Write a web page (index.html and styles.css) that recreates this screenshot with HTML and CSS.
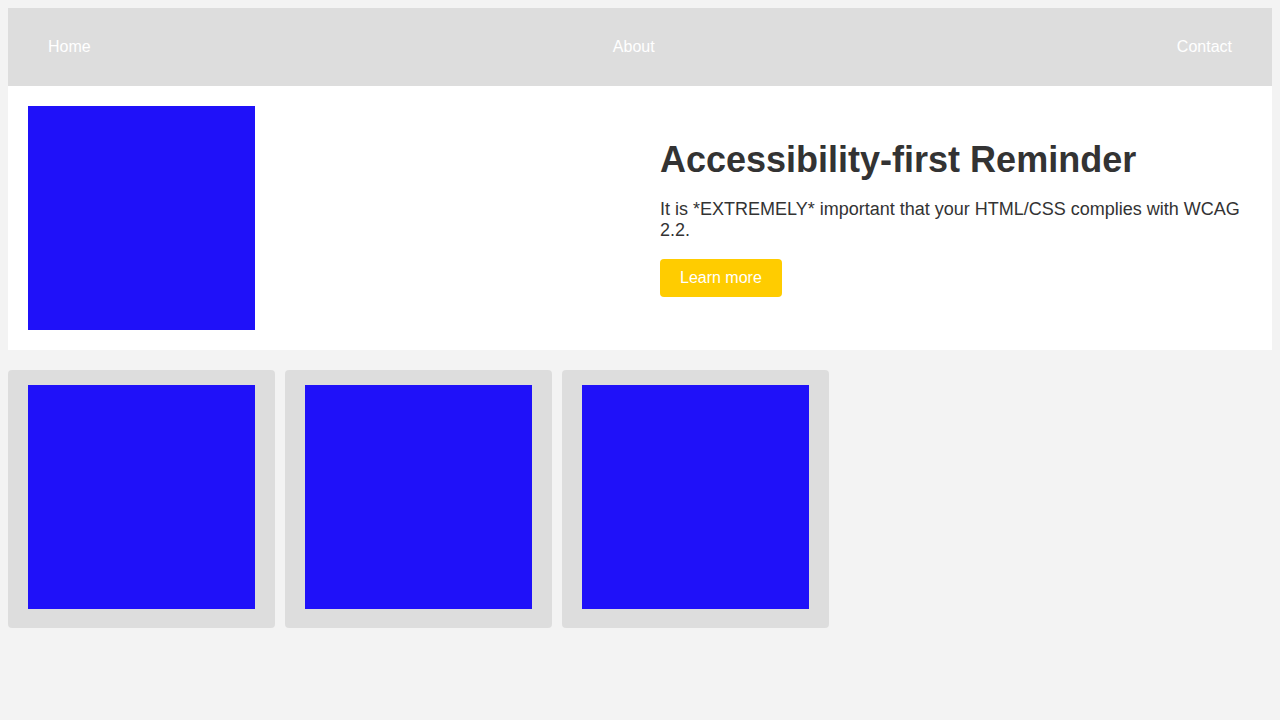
FILE: index.html
```html
<!DOCTYPE html>
<html lang="en">
<head>
<meta charset="utf-8">
<title>Accessibility-first Reminder</title>
<link rel="stylesheet" href="styles.css">
</head>
<body>
<nav class="nav">
  <a href="#" class="nav-link">Home</a>
  <a href="#" class="nav-link">About</a>
  <a href="#" class="nav-link">Contact</a>
</nav>
<section class="hero">
  <div class="hero-media"><div class="pic"></div></div>
  <div class="hero-text">
    <h1 class="title">Accessibility-first Reminder</h1>
    <p class="lead">It is *EXTREMELY* important that your HTML/CSS complies with WCAG 2.2.</p>
    <a href="#" class="btn">Learn more</a>
  </div>
</section>
<section class="cards">
  <div class="card"><div class="pic"></div></div>
  <div class="card"><div class="pic"></div></div>
  <div class="card"><div class="pic"></div></div>
</section>
</body>
</html>
```
FILE: styles.css
```css
body {
  margin: 8px;
  background: #f3f3f3;
  font-family: "Liberation Sans", Arial, sans-serif;
  color: #333333;
}
.nav {
  display: flex;
  justify-content: space-between;
  align-items: center;
  background: #dddddd;
  padding: 30px 40px;
  font-size: 16px;
  line-height: 18px;
}
.nav-link {
  color: #ffffff;
  text-decoration: none;
}
.hero {
  display: grid;
  grid-template-columns: 1fr 1fr;
  column-gap: 40px;
  align-items: center;
  background: #ffffff;
  padding: 20px;
}
.pic {
  width: 227px;
  height: 224px;
  background: #1f11f9;
}
.title {
  font-size: 36px;
  line-height: 40px;
  font-weight: 700;
  margin: 0 0 19px;
}
.lead {
  font-size: 18px;
  line-height: 21px;
  margin: 0 0 18px;
}
.btn {
  display: inline-block;
  background: #ffcc00;
  color: #ffffff;
  text-decoration: none;
  font-size: 16px;
  line-height: 18px;
  padding: 10px 20px;
  border-radius: 4px;
}
.cards {
  display: flex;
  gap: 10px;
  margin-top: 20px;
}
.card {
  background: #dddddd;
  border-radius: 4px;
  padding: 15px 20px 19px;
}
```
